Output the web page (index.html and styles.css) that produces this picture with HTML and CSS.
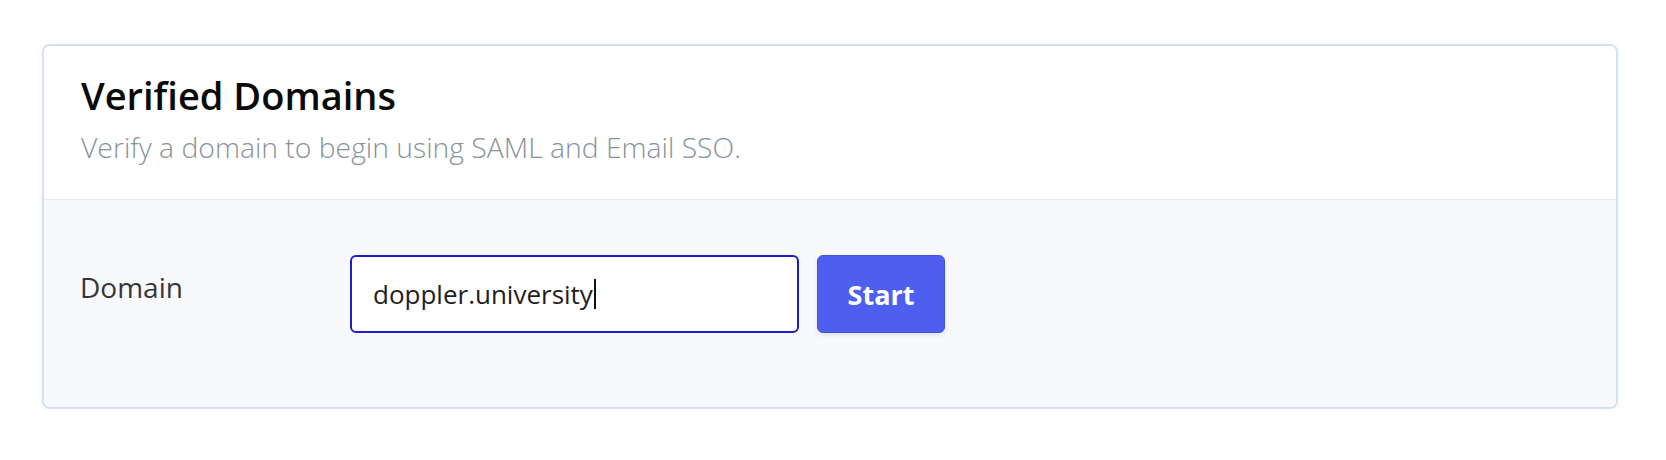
FILE: index.html
```html
<!DOCTYPE html>
<html lang="en">
<head>
<meta charset="utf-8">
<title>Verified Domains</title>
<link rel="stylesheet" href="styles.css">
</head>
<body>
<main class="page">
  <section class="card">
    <header class="card-header">
      <h2 class="card-title">Verified Domains</h2>
      <p class="card-subtitle">Verify a domain to begin using SAML and Email SSO.</p>
    </header>
    <div class="card-body">
      <div class="field-row">
        <label class="field-label" for="domain">Domain</label>
        <div class="field-controls">
          <div class="text-input" id="domain" role="textbox" aria-label="Domain">doppler.university<span class="caret"></span></div>
          <button class="btn-primary" type="button">Start</button>
        </div>
      </div>
    </div>
  </section>
</main>
</body>
</html>
```
FILE: styles.css
```css
* {
  box-sizing: border-box;
}

html, body {
  margin: 0;
  padding: 0;
  background: #ffffff;
}

body {
  font-family: "Open Sans", "Noto Sans", "Liberation Sans", sans-serif;
  color: #222;
}

.page {
  padding: 44px 48px 0 42px;
}

.card {
  border: 2px solid #d7e0f1;
  border-radius: 8px;
  overflow: hidden;
  background: #ffffff;
  box-shadow: 0 1px 6px rgba(60, 80, 140, 0.07);
}

.card-header {
  padding: 27px 38px 31px 37px;
  border-bottom: 1px solid #e7e8ec;
  background: #ffffff;
}

.card-title {
  margin: 0;
  font-size: 38px;
  line-height: 1.2;
  font-weight: 600;
  color: #0a0a0a;
}

.card-subtitle {
  margin: 7px 0 0;
  font-size: 28.3px;
  line-height: 1.5;
  font-weight: 300;
  color: #8a9299;
}

.card-body {
  background: #f8f9fd;
  padding: 55px 38px 74px 36px;
}

.field-row {
  display: flex;
  align-items: flex-start;
}

.field-label {
  width: 270px;
  flex: none;
  margin-top: 11px;
  font-size: 28px;
  line-height: 1.5;
  color: #363636;
}

.field-controls {
  display: flex;
  align-items: stretch;
  gap: 18px;
}

.text-input {
  width: 449px;
  height: 78px;
  border: 2px solid #1c1cc9;
  border-radius: 6px;
  background: #ffffff;
  padding: 0 21px;
  display: flex;
  align-items: center;
  font-size: 26px;
  color: #1e1e1e;
}

.caret {
  display: inline-block;
  width: 2px;
  height: 30px;
  background: #111;
  margin-left: 1px;
}

.btn-primary {
  width: 128px;
  height: 78px;
  border: 1px solid #4553da;
  border-radius: 6px;
  background: #4e5ff0;
  color: #ffffff;
  font-family: inherit;
  font-size: 27px;
  font-weight: 700;
  box-shadow: 0 2px 4px rgba(40, 50, 120, 0.12);
  cursor: pointer;
}
```
